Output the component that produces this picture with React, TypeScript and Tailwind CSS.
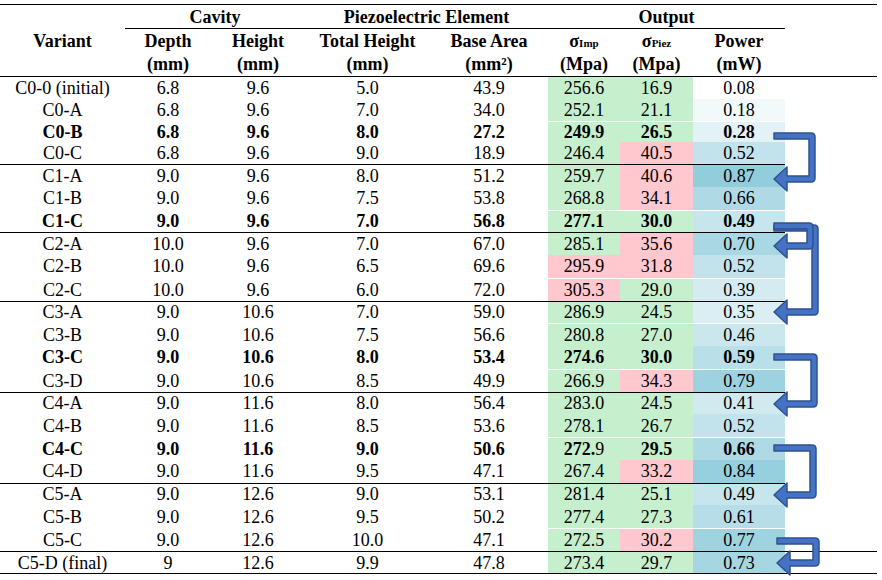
type Row = {
  v: string;
  d: string;
  h: string;
  th: string;
  ba: string;
  imp: string;
  piez: string;
  p: number;
  bold?: boolean;
  sep?: 'group' | 'white' | 'final';
};

const rows: Row[] = [
  { v: 'C0-0 (initial)', d: '6.8', h: '9.6', th: '5.0', ba: '43.9', imp: '256.6', piez: '16.9', p: 0.08 },
  { v: 'C0-A', d: '6.8', h: '9.6', th: '7.0', ba: '34.0', imp: '252.1', piez: '21.1', p: 0.18 },
  { v: 'C0-B', d: '6.8', h: '9.6', th: '8.0', ba: '27.2', imp: '249.9', piez: '26.5', p: 0.28, bold: true, sep: 'white' },
  { v: 'C0-C', d: '6.8', h: '9.6', th: '9.0', ba: '18.9', imp: '246.4', piez: '40.5', p: 0.52 },
  { v: 'C1-A', d: '9.0', h: '9.6', th: '8.0', ba: '51.2', imp: '259.7', piez: '40.6', p: 0.87, sep: 'group' },
  { v: 'C1-B', d: '9.0', h: '9.6', th: '7.5', ba: '53.8', imp: '268.8', piez: '34.1', p: 0.66 },
  { v: 'C1-C', d: '9.0', h: '9.6', th: '7.0', ba: '56.8', imp: '277.1', piez: '30.0', p: 0.49, bold: true, sep: 'white' },
  { v: 'C2-A', d: '10.0', h: '9.6', th: '7.0', ba: '67.0', imp: '285.1', piez: '35.6', p: 0.7, sep: 'group' },
  { v: 'C2-B', d: '10.0', h: '9.6', th: '6.5', ba: '69.6', imp: '295.9', piez: '31.8', p: 0.52 },
  { v: 'C2-C', d: '10.0', h: '9.6', th: '6.0', ba: '72.0', imp: '305.3', piez: '29.0', p: 0.39, sep: 'white' },
  { v: 'C3-A', d: '9.0', h: '10.6', th: '7.0', ba: '59.0', imp: '286.9', piez: '24.5', p: 0.35, sep: 'group' },
  { v: 'C3-B', d: '9.0', h: '10.6', th: '7.5', ba: '56.6', imp: '280.8', piez: '27.0', p: 0.46, sep: 'white' },
  { v: 'C3-C', d: '9.0', h: '10.6', th: '8.0', ba: '53.4', imp: '274.6', piez: '30.0', p: 0.59, bold: true },
  { v: 'C3-D', d: '9.0', h: '10.6', th: '8.5', ba: '49.9', imp: '266.9', piez: '34.3', p: 0.79, sep: 'white' },
  { v: 'C4-A', d: '9.0', h: '11.6', th: '8.0', ba: '56.4', imp: '283.0', piez: '24.5', p: 0.41, sep: 'group' },
  { v: 'C4-B', d: '9.0', h: '11.6', th: '8.5', ba: '53.6', imp: '278.1', piez: '26.7', p: 0.52 },
  { v: 'C4-C', d: '9.0', h: '11.6', th: '9.0', ba: '50.6', imp: '272.9', piez: '29.5', p: 0.66, bold: true, sep: 'white' },
  { v: 'C4-D', d: '9.0', h: '11.6', th: '9.5', ba: '47.1', imp: '267.4', piez: '33.2', p: 0.84 },
  { v: 'C5-A', d: '9.0', h: '12.6', th: '9.0', ba: '53.1', imp: '281.4', piez: '25.1', p: 0.49, sep: 'group' },
  { v: 'C5-B', d: '9.0', h: '12.6', th: '9.5', ba: '50.2', imp: '277.4', piez: '27.3', p: 0.61 },
  { v: 'C5-C', d: '9.0', h: '12.6', th: '10.0', ba: '47.1', imp: '272.5', piez: '30.2', p: 0.77, sep: 'white' },
  { v: 'C5-D (final)', d: '9', h: '12.6', th: '9.9', ba: '47.8', imp: '273.4', piez: '29.7', p: 0.73, sep: 'final' },
];

// colour scale for the power column: white at min, teal at max
function powerColor(p: number) {
  const t = Math.max(0, Math.min(1, (p - 0.08) / (0.87 - 0.08)));
  const mix = (a: number, b: number) => Math.round(a + (b - a) * t);
  return `rgb(${mix(255, 146)}, ${mix(255, 205)}, ${mix(255, 220)})`;
}

function arrowPath(y1: number, y2: number, xr: number, x0 = 774) {
  const t = 6;
  const r = 4;
  const hh = 12;
  const base = x0 + 13;
  return `M${x0} ${y1 - t / 2} L${xr - r} ${y1 - t / 2} Q${xr} ${y1 - t / 2} ${xr} ${y1 - t / 2 + r} L${xr} ${y2 + t / 2 - r} Q${xr} ${y2 + t / 2} ${xr - r} ${y2 + t / 2} L${base} ${y2 + t / 2} L${base} ${y2 + hh} L${x0} ${y2} L${base} ${y2 - hh} L${base} ${y2 - t / 2} L${xr - t} ${y2 - t / 2} L${xr - t} ${y1 + t / 2} L${x0} ${y1 + t / 2} Z`;
}

const arrows = [
  { y1: 136, y2: 179, xr: 815 },
  { y1: 228, y2: 312, xr: 818 },
  { y1: 226, y2: 246, xr: 813 },
  { y1: 357, y2: 404, xr: 817 },
  { y1: 448, y2: 495, xr: 816 },
  { y1: 541, y2: 563, xr: 819, x0: 777 },
];

function Sigma({ sub }: { sub: string }) {
  return (
    <span>
      σ<span className="text-[11px]">{sub}</span>
    </span>
  );
}

export default function App() {
  return (
    <div className="relative w-[882px] h-[580px] bg-white pt-[4px] font-['Liberation_Serif',serif] text-[18px] leading-none text-black">
      <div className="w-[877px] border-t border-b border-black flex font-bold h-[73px]">
        <div className="w-[125px] flex items-center justify-center">Variant</div>
        <div className="w-[660px] flex flex-col">
          <div className="flex h-[24px] border-b border-black">
            <div className="w-[180px] flex items-center justify-center">Cavity</div>
            <div className="w-[243px] flex items-center justify-center">Piezoelectric Element</div>
            <div className="w-[237px] flex items-center justify-center">Output</div>
          </div>
          <div className="flex h-[23px]">
            <div className="w-[86px] flex items-center justify-center">Depth</div>
            <div className="w-[94px] flex items-center justify-center">Height</div>
            <div className="w-[125px] flex items-center justify-center">Total Height</div>
            <div className="w-[118px] flex items-center justify-center">Base Area</div>
            <div className="w-[72px] flex items-center justify-center">
              <Sigma sub="Imp" />
            </div>
            <div className="w-[73px] flex items-center justify-center">
              <Sigma sub="Piez" />
            </div>
            <div className="w-[92px] flex items-center justify-center">Power</div>
          </div>
          <div className="flex h-[24px]">
            <div className="w-[86px] flex items-center justify-center">(mm)</div>
            <div className="w-[94px] flex items-center justify-center">(mm)</div>
            <div className="w-[125px] flex items-center justify-center">(mm)</div>
            <div className="w-[118px] flex items-center justify-center">(mm²)</div>
            <div className="w-[72px] flex items-center justify-center">(Mpa)</div>
            <div className="w-[73px] flex items-center justify-center">(Mpa)</div>
            <div className="w-[92px] flex items-center justify-center">(mW)</div>
          </div>
        </div>
      </div>

      {rows.map((r, i) => {
        const impGood = parseFloat(r.imp) < 290;
        const piezGood = parseFloat(r.piez) <= 30;
        const rowClass =
          r.sep === 'final'
            ? 'flex h-[23.5px] w-[877px] border-t border-b border-black'
            : i < 4
              ? 'flex h-[21.75px] w-[877px]'
              : 'flex h-[22.75px] w-[877px]';
        return (
          <div key={r.v} className={rowClass}>
            <div
              className={
                r.sep === 'group'
                  ? 'flex w-[785px] border-t border-black'
                  : r.sep === 'white'
                    ? 'flex w-[785px] border-t border-white'
                    : 'flex w-[785px]'
              }
            >
              <div className={r.bold ? 'w-[125px] flex items-center justify-center font-bold' : 'w-[125px] flex items-center justify-center'}>{r.v}</div>
              <div className={r.bold ? 'w-[86px] flex items-center justify-center font-bold' : 'w-[86px] flex items-center justify-center'}>{r.d}</div>
              <div className={r.bold ? 'w-[94px] flex items-center justify-center font-bold' : 'w-[94px] flex items-center justify-center'}>{r.h}</div>
              <div className={r.bold ? 'w-[125px] flex items-center justify-center font-bold' : 'w-[125px] flex items-center justify-center'}>{r.th}</div>
              <div className={r.bold ? 'w-[118px] flex items-center justify-center font-bold' : 'w-[118px] flex items-center justify-center'}>{r.ba}</div>
              <div className={impGood ? 'w-[72px] flex items-center justify-center bg-[#c6efce]' : 'w-[72px] flex items-center justify-center bg-[#ffc7ce]'}>
                {r.v === 'C4-C' ? (
                  <span>
                    <b>272.</b>9
                  </span>
                ) : (
                  <span className={r.bold ? 'font-bold' : ''}>{r.imp}</span>
                )}
              </div>
              <div className={piezGood ? 'w-[73px] flex items-center justify-center bg-[#c6efce]' : 'w-[73px] flex items-center justify-center bg-[#ffc7ce]'}>
                <span className={r.bold ? 'font-bold' : ''}>{r.piez}</span>
              </div>
              <div className="w-[92px] flex items-center justify-center" style={{ backgroundColor: powerColor(r.p) }}>
                <span className={r.bold ? 'font-bold' : ''}>{r.p.toFixed(2)}</span>
              </div>
            </div>
            <div className="w-[92px]" />
          </div>
        );
      })}

      <svg className="absolute left-0 top-0 pointer-events-none" width="882" height="580" viewBox="0 0 882 580">
        {arrows.map((a, i) => (
          <path key={i} d={arrowPath(a.y1, a.y2, a.xr, a.x0)} fill="#4472c4" stroke="#2f528f" strokeWidth="1.5" strokeLinejoin="round" />
        ))}
      </svg>
    </div>
  );
}
